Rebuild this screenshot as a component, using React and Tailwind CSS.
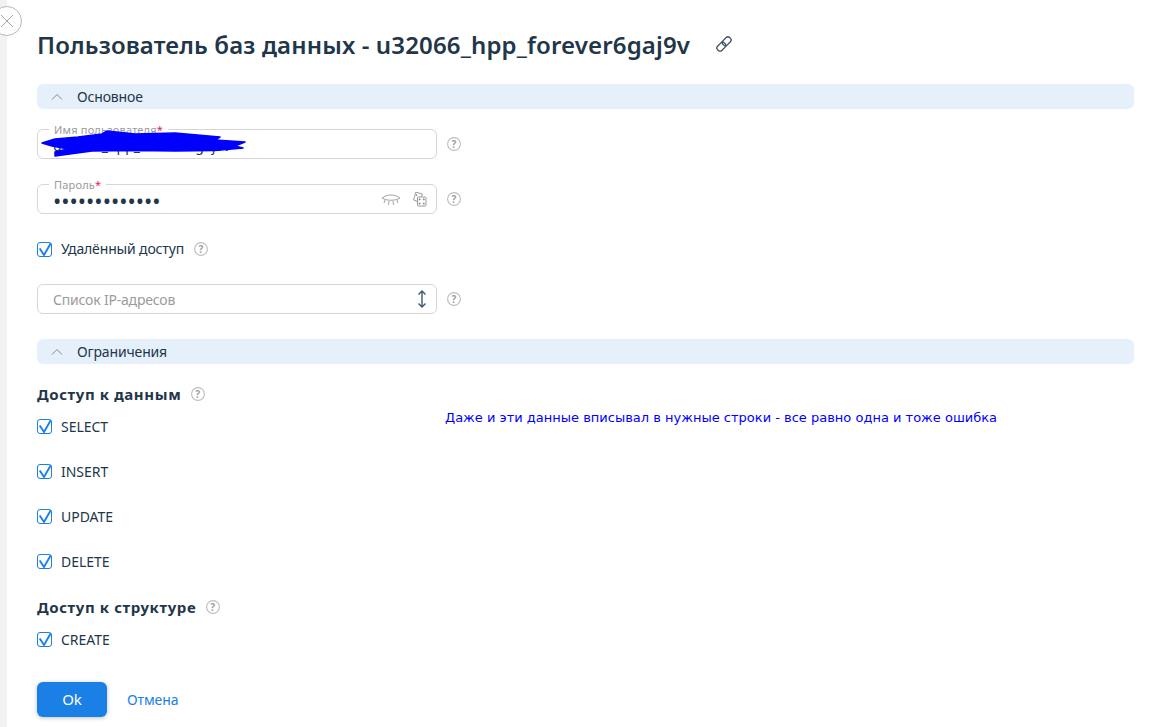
function Help({ className = "" }) {
  return (
    <svg width="14" height="14" viewBox="0 0 14 14" className={"shrink-0 " + className}>
      <circle cx="7" cy="7" r="6.4" fill="none" stroke="#bdbdbd" strokeWidth="1.1" />
      <text x="7" y="10.6" textAnchor="middle" fontSize="10" fontWeight="700" fill="#a0a0a0" fontFamily="Noto Sans, sans-serif">?</text>
    </svg>
  );
}

function Chevron() {
  return (
    <svg width="12" height="8" viewBox="0 0 12 8" className="shrink-0">
      <path d="M1 6.5 L6 1.5 L11 6.5" fill="none" stroke="#7f8c99" strokeWidth="1" />
    </svg>
  );
}

function Section({ title, className = "" }) {
  return (
    <div className={"flex h-[25px] items-center rounded-md bg-[#e6f0fb] pl-[14px] text-[14px] tracking-[-0.15px] text-[#22364a] " + className}>
      <Chevron />
      <span className="ml-[14px]">{title}</span>
    </div>
  );
}

function Check({ label, help, className = "" }) {
  return (
    <div className={"flex h-[20px] items-center text-[14px] text-[#22364a] " + className}>
      <svg width="15" height="15" viewBox="0 0 15 15" className="shrink-0">
        <rect x="0.5" y="0.5" width="14" height="14" rx="2.5" fill="#fff" stroke="#1a80e6" />
        <path d="M2.7 6.5 L7 13 L13.8 1.2" fill="none" stroke="#1a80e6" strokeWidth="1.9" />
      </svg>
      <span className={help ? "ml-[9px] mb-[1px] tracking-[-0.15px]" : "ml-[9px] tracking-[-0.02px]"}>{label}</span>
      {help && <Help className="ml-[10px]" />}
    </div>
  );
}

function Heading({ children, className = "" }) {
  return (
    <div className={"flex h-[20px] items-center text-[15px] font-bold tracking-[0.6px] text-[#22364a] " + className}>
      <span>{children}</span>
      <Help className="ml-[10px]" />
    </div>
  );
}

function Legend({ children }) {
  return (
    <span className="absolute left-[11px] top-[-6px] flex h-[12px] items-center bg-white px-[5px] text-[11px] leading-[12px] tracking-[0.2px] text-[#9b9b9b]">
      {children}
      <span className="text-[#e6195a]">*</span>
    </span>
  );
}

function Field({ children, legend, className = "" }) {
  return (
    <div className={"flex items-center " + className}>
      <div className="relative flex h-[30px] w-[400px] items-center rounded-md border border-[#d6d6d6] bg-white pl-[15px] pr-[9px]">
        {legend && <Legend>{legend}</Legend>}
        {children}
      </div>
      <Help className="ml-[10px]" />
    </div>
  );
}

export default function App() {
  return (
    <div className="relative flex h-[727px] w-[1160px] overflow-hidden bg-white font-['Noto_Sans',sans-serif]">
      <div className="w-[7px] shrink-0 bg-[#f2f2f2]" />

      <div className="absolute left-[-8px] top-[6px] flex h-[30px] w-[30px] items-center justify-center rounded-full border border-[#b8b8b8] bg-white">
        <svg width="14" height="14" viewBox="0 0 14 14">
          <path d="M1 1 L13 13 M13 1 L1 13" stroke="#8c8c8c" strokeWidth="0.8" fill="none" />
        </svg>
      </div>

      <div className="ml-[30px] flex w-[1097px] flex-col">
        <div className="mt-[27px] flex h-[36px] items-center text-[24px] font-semibold tracking-[0.14px] text-[#22364a]">
          <span>Пользователь баз данных - u32066_hpp_forever6gaj9v</span>
          <svg width="18" height="18" viewBox="0 0 18 18" className="mb-[3px] ml-[25px]" fill="none" stroke="#3d4f61" strokeWidth="1.3">
            <g transform="rotate(-45 9 9)">
              <rect x="0.5" y="6" width="9.5" height="6" rx="2.4" />
              <rect x="8" y="6" width="9.5" height="6" rx="2.4" />
            </g>
          </svg>
        </div>

        <Section title="Основное" className="mt-[21px]" />

        <Field legend="Имя пользователя" className="mt-[20px]">
          <span className="mt-[2px] text-[14px] text-[#22364a]">u32066_hpp_forever6gaj9v</span>
          <svg width="210" height="30" viewBox="0 0 210 30" className="absolute left-[2px] top-[0px]">
            <path
              d="M2 13 L15 9 L38 7 L62 4 L67 1 L95 4 L135 3 L180 7 L175 10 L205 12 L195 16 L203 18 L175 20.5 L135 21 L95 20.5 L52 21 L15 26 L15 22 L28 19 L12 16 Z"
              fill="#0000ff"
              stroke="#0000ff"
              strokeWidth="1.5"
              strokeLinejoin="round"
            />
          </svg>
        </Field>

        <Field legend="Пароль" className="mt-[25px]">
          <span className="flex-1 pt-[2px] text-[22px] leading-[14px] text-[#22364a]">•••••••••••••</span>
          <svg width="20" height="14" viewBox="0 0 20 14" className="mr-[11px] mt-[1px]" fill="none" stroke="#9a9a9a" strokeWidth="0.9">
            <path d="M1 5 C6 1 14 1 19 5 C14 8 6 8 1 5 Z" />
            <path d="M4 7 L3 10 M8 8 L7.5 12 M12 8 L12.5 12 M16 7 L17 10" />
          </svg>
          <svg width="15" height="16" viewBox="0 0 15 16" fill="none" stroke="#8e8e8e" strokeWidth="0.9">
            <path d="M5.5 10.5 L1.6 9 L3.8 1.2 L10.2 3 L9.6 5.5" />
            <rect x="5.5" y="6" width="8.5" height="9" rx="0.8" />
            <circle cx="4.6" cy="4" r="0.5" fill="#8e8e8e" />
            <circle cx="7.6" cy="8.4" r="0.6" fill="#777" />
            <circle cx="11.8" cy="8.4" r="0.6" fill="#777" />
            <circle cx="7.6" cy="12.6" r="0.6" fill="#777" />
            <circle cx="11.8" cy="12.6" r="0.6" fill="#777" />
          </svg>
        </Field>

        <Check label="Удалённый доступ" help className="mt-[25px]" />

        <Field className="mt-[25px]">
          <span className="flex-1 text-[14px] tracking-[-0.2px] text-[#9b9b9b]">Список IP-адресов</span>
          <svg width="10" height="20" viewBox="0 0 10 20" fill="none" stroke="#3f5a70" strokeWidth="1.4" className="mr-[0px]">
            <path d="M5 2 L5 18 M1.5 5.5 L5 2 L8.5 5.5 M1.5 14.5 L5 18 L8.5 14.5" />
          </svg>
        </Field>

        <Section title="Ограничения" className="mt-[25px]" />

        <Heading className="mt-[20px]">Доступ к данным</Heading>
        <Check label="SELECT" className="mt-[12px]" />
        <Check label="INSERT" className="mt-[25px]" />
        <Check label="UPDATE" className="mt-[25px]" />
        <Check label="DELETE" className="mt-[25px]" />

        <Heading className="mt-[26px]">Доступ к структуре</Heading>
        <Check label="CREATE" className="mt-[12px]" />

        <div className="mt-[33px] flex items-center">
          <button className="h-[35px] w-[70px] rounded-md bg-[#1a80e6] text-[15px] text-white shadow-[0_1px_4px_rgba(0,0,0,0.25)]">Ok</button>
          <a className="ml-[20px] text-[14px] tracking-[-0.1px] text-[#1a80e6]">Отмена</a>
        </div>
      </div>

      <div className="absolute left-[445px] top-[409px] whitespace-nowrap font-['DejaVu_Sans',sans-serif] text-[13px] leading-[18px] text-[#0000ff]">
        Даже и эти данные вписывал в нужные строки - все равно одна и тоже ошибка
      </div>
    </div>
  );
}
